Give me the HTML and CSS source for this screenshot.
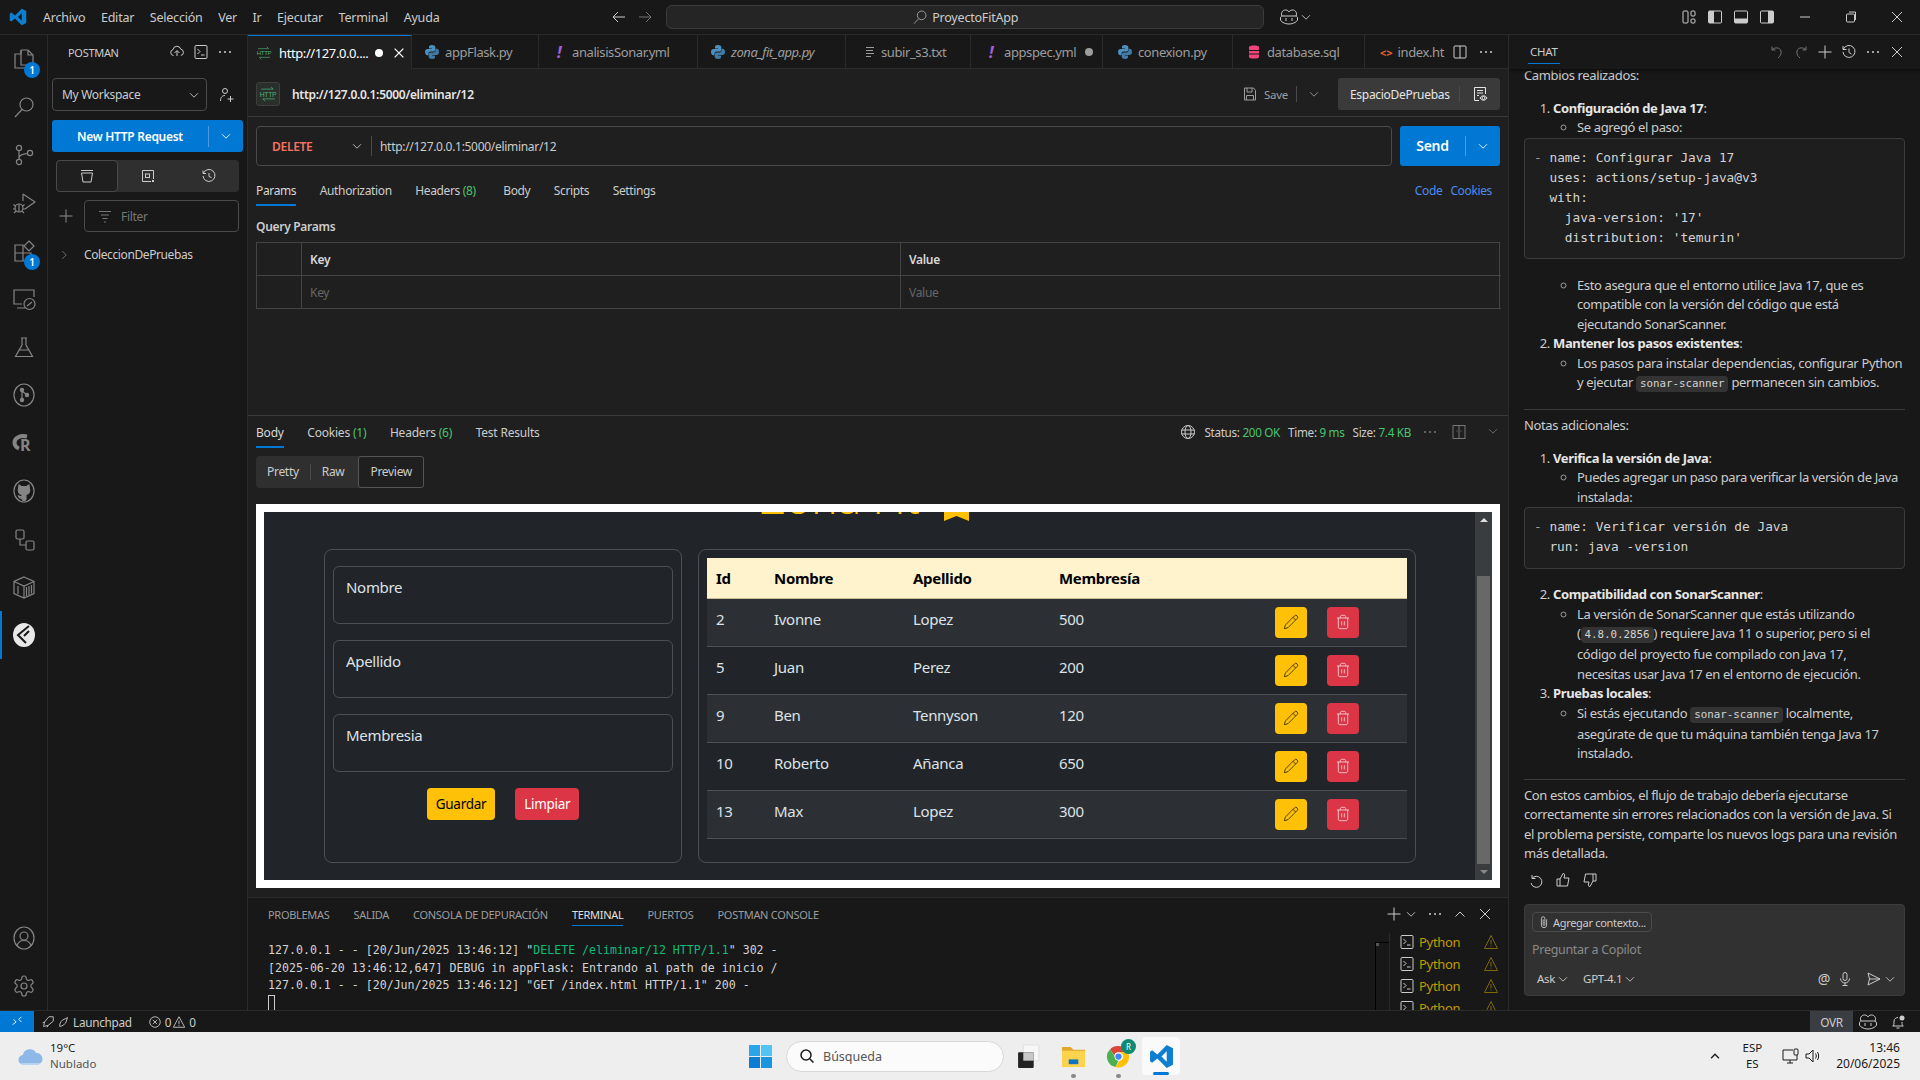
FILE: index.html
```html
<!DOCTYPE html>
<html lang="es">
<head>
    <meta charset="UTF-8">
    <title>ProyectoFitApp - Postman</title>
    <link rel="stylesheet" href="styles.css">
</head>
<body>
    <svg class="defs" xmlns="http://www.w3.org/2000/svg">
        <symbol id="i-files" viewBox="0 0 24 24"><path d="M9 3h7l5 5v10h-4M9 3v4M16 3v5h5"/><path d="M9 7H3v14h14v-3M9 3v15h8"/></symbol>
        <symbol id="i-search" viewBox="0 0 24 24"><circle cx="14.5" cy="9.5" r="6.5"/><path d="M10 14.5L3 22"/></symbol>
        <symbol id="i-scm" viewBox="0 0 24 24"><circle cx="7" cy="5" r="2.6"/><circle cx="7" cy="19" r="2.6"/><circle cx="18" cy="10" r="2.6"/><path d="M7 7.6v8.8M15.4 10.5c-4 .5-8.4 1-8.4 5"/></symbol>
        <symbol id="i-debug" viewBox="0 0 24 24"><path d="M11 3l12 8-10 7"/><path d="M11 3v7"/><circle cx="7" cy="17" r="4"/><path d="M7 13v8M1.5 13.5l2.5 2M12.5 13.5l-2.5 2M1 18h2M13 18h-2M2 22l2-2M12 22l-2-2"/></symbol>
        <symbol id="i-ext" viewBox="0 0 24 24"><path d="M3 6h8v16H3zM3 14h16v8h-8"/><path d="M17 2l5 5-5 5-5-5z"/></symbol>
        <symbol id="i-remote" viewBox="0 0 24 24"><path d="M10 17H2V3h20v7M5 21h8"/><circle cx="17.5" cy="17" r="5.5"/><path d="M15 19l5-4"/></symbol>
        <symbol id="i-beaker" viewBox="0 0 24 24"><path d="M9 3h6M10 3v7L3.5 21.5h17L14 10V3M7 15h10"/></symbol>
        <symbol id="i-graph" viewBox="0 0 24 24"><ellipse cx="12" cy="12" rx="10" ry="11"/><circle cx="10" cy="7" r="1.6" fill="currentColor"/><circle cx="10" cy="17" r="1.6" fill="currentColor"/><circle cx="15" cy="12" r="1.6" fill="currentColor"/><path d="M10 7v10M10 8l5 4"/></symbol>
        <symbol id="i-github" viewBox="0 0 24 24"><ellipse cx="12" cy="12" rx="10" ry="11"/><path fill="currentColor" d="M7 6l2.500 1.500h5L17 6l.4 3.500c1 2.500 0 5.500-3.400 6V20l-1 1.500h-2L10 20v-1c-2 .5-3-.5-3.500-2l3.500 1v-2.500c-3.400-.5-4.400-3.500-3.400-6z"/></symbol>
        <symbol id="i-tree" viewBox="0 0 24 24"><rect x="4" y="3" width="8" height="9" rx="1.500"/><rect x="14" y="14" width="8" height="9" rx="1.500"/><path d="M8 12v6h6"/></symbol>
        <symbol id="i-box" viewBox="0 0 24 24"><path d="M12 2l10 4.500v12L12 23 2 18.500v-12zM2 6.500L12 11l10-4.500M12 11v12"/><path d="M14.500 12v9M17 11v9M19.500 10v8.500M6 11v8"/></symbol>
        <symbol id="i-account" viewBox="0 0 24 24"><ellipse cx="12" cy="12" rx="10" ry="11"/><circle cx="12" cy="10" r="4"/><path d="M5 20c1-4 4-5.500 7-5.500s6 1.500 7 5.500"/></symbol>
        <symbol id="i-gear" viewBox="0 0 24 24"><path d="M12.220 2h-.44a2 2 0 0 0-2 2v.18a2 2 0 0 1-1 1.730l-.43.25a2 2 0 0 1-2 0l-.15-.08a2 2 0 0 0-2.730.73l-.22.38a2 2 0 0 0 .73 2.730l.15.1a2 2 0 0 1 1 1.720v.51a2 2 0 0 1-1 1.740l-.15.09a2 2 0 0 0-.73 2.730l.22.38a2 2 0 0 0 2.730.73l.15-.08a2 2 0 0 1 2 0l.43.25a2 2 0 0 1 1 1.730V20a2 2 0 0 0 2 2h.44a2 2 0 0 0 2-2v-.18a2 2 0 0 1 1-1.730l.43-.25a2 2 0 0 1 2 0l.15.08a2 2 0 0 0 2.730-.73l.22-.39a2 2 0 0 0-.73-2.730l-.15-.08a2 2 0 0 1-1-1.740v-.5a2 2 0 0 1 1-1.740l.15-.09a2 2 0 0 0 .73-2.730l-.22-.38a2 2 0 0 0-2.730-.73l-.15.08a2 2 0 0 1-2 0l-.43-.25a2 2 0 0 1-1-1.730V4a2 2 0 0 0-2-2z"/><circle cx="12" cy="12" r="3"/></symbol>
        <symbol id="i-chev-d" viewBox="0 0 16 16"><path d="M3.500 6L8 10.500 12.500 6"/></symbol>
        <symbol id="i-chev-r" viewBox="0 0 16 16"><path d="M6 3.500L10.500 8 6 12.500"/></symbol>
        <symbol id="i-chev-u" viewBox="0 0 16 16"><path d="M3.500 10.500L8 6l4.500 4.500"/></symbol>
        <symbol id="i-close" viewBox="0 0 16 16"><path d="M3 3l10 10M13 3L3 13"/></symbol>
        <symbol id="i-plus" viewBox="0 0 16 16"><path d="M8 1.500v13M1.500 8h13"/></symbol>
        <symbol id="i-dots" viewBox="0 0 16 16"><circle cx="3" cy="8" r="1" fill="currentColor" stroke="none"/><circle cx="8" cy="8" r="1" fill="currentColor" stroke="none"/><circle cx="13" cy="8" r="1" fill="currentColor" stroke="none"/></symbol>
        <symbol id="i-back" viewBox="0 0 16 16"><path d="M14 8H2M7 3L2 8l5 5"/></symbol>
        <symbol id="i-fwd" viewBox="0 0 16 16"><path d="M2 8h12M9 3l5 5-5 5"/></symbol>
        <symbol id="i-copilot" viewBox="0 0 20 16"><path d="M3 7c-1.500-3 .5-6 3.500-6 2 0 3 1 3.500 2 .5-1 1.500-2 3.500-2 3 0 5 3 3.500 6 1 .5 1.500 1 1.500 2v2c0 1-3.500 4-8.500 4S1.500 12 1.500 11V9c0-1 .5-1.500 1.500-2z"/><path d="M7 9v3M13 9v3M3 7h14" /></symbol>
        <symbol id="i-http" viewBox="0 0 24 24"><path d="M3 5.500h16l-3-3M21 18.500H5l3 3"/><text x="12" y="15.500" text-anchor="middle" font-size="9" font-family="Liberation Sans, sans-serif" fill="currentColor" stroke="none">HTTP</text></symbol>
        <symbol id="i-python" viewBox="0 0 16 16"><path fill="#4d90bf" stroke="none" d="M7.800 1C5.500 1 5 2 5 3v1.500h3V5H3.500C2 5 1 6 1 8s1 3.200 2.300 3.200H4.500V9.500C4.500 8.300 5.500 7.500 6.700 7.500h2.800c1 0 1.800-.8 1.800-1.800V3c0-1.200-1.500-2-3.500-2z"/><path fill="#3f7ba6" stroke="none" d="M8.200 15c2.300 0 2.800-1 2.800-2v-1.500H8V11h4.500c1.500 0 2.500-1 2.500-3s-1-3.200-2.300-3.200h-1.200v1.700c0 1.200-1 2-2.200 2H6.500c-1 0-1.800.8-1.800 1.800V13c0 1.200 1.500 2 3.500 2z"/></symbol>
        <symbol id="i-term" viewBox="0 0 16 16"><rect x="2" y="1.500" width="12" height="13" rx="1"/><path d="M4.500 5L7 7.500 4.500 10M8 11h3.500"/></symbol>
        <symbol id="i-warn" viewBox="0 0 16 16"><path d="M8 1.500l6.500 13h-13zM8 6v4.500M8 11.700v1"/></symbol>
        <symbol id="i-pencil" viewBox="0 0 24 24"><path d="M17 3a2.850 2.830 0 1 1 4 4L7.500 20.500 2 22l1.500-5.500zM15 5l4 4"/></symbol>
        <symbol id="i-trash" viewBox="0 0 24 24"><path d="M3 6h18M19 6v14c0 1-1 2-2 2H7c-1 0-2-1-2-2V6M8 6V4c0-1 1-2 2-2h4c1 0 2 1 2 2v2M10 11v6M14 11v6"/></symbol>
    </svg>

    <header class="titlebar">
        <svg class="vs-logo" viewBox="0 0 24 24"><path fill="#0e7fd0" d="M17 1l6 3v16l-6 3L8 14l-5 4-2-1.500V7.500L3 6l5 4zM17 7l-5 5 5 5z"/></svg>
        <nav class="menu">
            <span>Archivo</span><span>Editar</span><span>Selección</span><span>Ver</span><span>Ir</span><span>Ejecutar</span><span>Terminal</span><span>Ayuda</span>
        </nav>
        <div class="nav-arrows">
            <svg class="ic"><use href="#i-back"/></svg>
            <svg class="ic dim"><use href="#i-fwd"/></svg>
        </div>
        <div class="command-center">
            <svg class="ic"><use href="#i-search"/></svg>
            <span>ProyectoFitApp</span>
        </div>
        <div class="title-copilot">
            <svg class="ic-copilot"><use href="#i-copilot"/></svg>
            <svg class="ic-sm"><use href="#i-chev-d"/></svg>
        </div>
        <div class="layout-btns">
            <svg class="ic" viewBox="0 0 16 16"><rect x="2" y="2" width="5" height="12" rx="1"/><rect x="10" y="2" width="4" height="5" rx="1"/><rect x="10" y="10" width="4" height="4" rx="1"/></svg>
            <svg class="ic" viewBox="0 0 16 16"><rect x="1.500" y="2" width="13" height="12" rx="1"/><rect class="solid" x="2" y="2" width="5" height="12"/></svg>
            <svg class="ic" viewBox="0 0 16 16"><rect x="1.500" y="2" width="13" height="12" rx="1"/><rect class="solid" x="2" y="9.500" width="12" height="4.500"/></svg>
            <svg class="ic" viewBox="0 0 16 16"><rect x="1.500" y="2" width="13" height="12" rx="1"/><rect class="solid" x="9" y="2" width="5" height="12"/></svg>
        </div>
        <div class="win-btns">
            <span class="win-btn"><svg class="ic" viewBox="0 0 16 16"><path d="M3 8h10"/></svg></span>
            <span class="win-btn"><svg class="ic" viewBox="0 0 16 16"><rect x="3.500" y="5" width="8" height="8" rx="1"/><path d="M6 3h6.500v8"/></svg></span>
            <span class="win-btn"><svg class="ic"><use href="#i-close"/></svg></span>
        </div>
    </header>

    <div class="workbench">
        <aside class="activity">
            <div class="act-top">
                <div class="act-item"><svg class="ic-24"><use href="#i-files"/></svg><span class="act-badge">1</span></div>
                <div class="act-item"><svg class="ic-24"><use href="#i-search"/></svg></div>
                <div class="act-item"><svg class="ic-24"><use href="#i-scm"/></svg></div>
                <div class="act-item"><svg class="ic-24"><use href="#i-debug"/></svg></div>
                <div class="act-item"><svg class="ic-24"><use href="#i-ext"/></svg><span class="act-badge">1</span></div>
                <div class="act-item"><svg class="ic-24"><use href="#i-remote"/></svg></div>
                <div class="act-item"><svg class="ic-24"><use href="#i-beaker"/></svg></div>
                <div class="act-item"><svg class="ic-24"><use href="#i-graph"/></svg></div>
                <div class="act-item"><svg class="ic-24" viewBox="0 0 24 24"><path d="M15 5.500C8 4 2.500 7 2.500 11.500c0 3 2 5 4.500 6" stroke-width="4"/><text class="r-letter" x="8" y="20">R</text></svg></div>
                <div class="act-item"><svg class="ic-24"><use href="#i-github"/></svg></div>
                <div class="act-item"><svg class="ic-24"><use href="#i-tree"/></svg></div>
                <div class="act-item"><svg class="ic-24"><use href="#i-box"/></svg></div>
                <div class="act-item act-active">
                    <svg class="ic-24 postman" viewBox="0 0 24 24"><ellipse cx="12" cy="12" rx="11" ry="12" fill="#e8e8e8" stroke="none"/><path d="M17 3l-11 9 8 8M12 13l5-5" stroke="#181818" stroke-width="2" fill="none"/></svg>
                </div>
            </div>
            <div class="act-bottom">
                <div class="act-item"><svg class="ic-24"><use href="#i-account"/></svg></div>
                <div class="act-item"><svg class="ic-24"><use href="#i-gear"/></svg></div>
            </div>
        </aside>

        <aside class="sidebar">
            <div class="side-head">
                <span class="side-title">POSTMAN</span>
                <svg class="ic" viewBox="0 0 16 16"><path d="M8 12V7M5.500 9L8 6.500 10.500 9M4.500 11.500A3 3 0 0 1 4 5.600a4 4 0 0 1 7.800-.4 3.200 3.200 0 0 1 0 6.300"/></svg>
                <svg class="ic"><use href="#i-term"/></svg>
                <svg class="ic"><use href="#i-dots"/></svg>
            </div>
            <div class="workspace-row">
                <div class="workspace-select"><span>My Workspace</span><svg class="ic-sm"><use href="#i-chev-d"/></svg></div>
                <svg class="ic" viewBox="0 0 16 16"><circle cx="6" cy="4" r="2.500"/><path d="M1.500 14c0-4 2-5.500 4.500-5.500M11.500 9v6M8.500 12h6"/></svg>
            </div>
            <div class="new-request">
                <span class="new-label">New HTTP Request</span>
                <span class="new-chev"><svg class="ic-sm"><use href="#i-chev-d"/></svg></span>
            </div>
            <div class="side-seg">
                <span class="seg-item seg-on"><svg class="ic" viewBox="0 0 16 16"><path d="M2 2.500h12M2.500 5h11l-1.500 9H4z"/></svg></span>
                <span class="seg-item"><svg class="ic" viewBox="0 0 16 16"><path d="M13.500 11V2.500h-11v11H11"/><rect x="5.500" y="6" width="4" height="3.500"/><rect class="solid" x="12" y="12" width="2" height="2"/></svg></span>
                <span class="seg-item"><svg class="ic" viewBox="0 0 16 16"><path d="M2.500 5a6 6 0 1 1-.5 3M2 2.500V5.500h3M8 5v3.500l2.500 1"/></svg></span>
            </div>
            <div class="filter-row">
                <svg class="ic"><use href="#i-plus"/></svg>
                <div class="filter-box">
                    <svg class="ic" viewBox="0 0 16 16"><path d="M2 3.500h12M4 7h8M5.500 10.500h5M7 14h2"/></svg>
                    <span>Filter</span>
                </div>
            </div>
            <div class="tree-row">
                <svg class="ic-sm"><use href="#i-chev-r"/></svg>
                <span>ColeccionDePruebas</span>
            </div>
        </aside>

        <main class="main">
            <div class="tabs">
                <div class="tab tab-active tab-w1"><svg class="ic http-ic"><use href="#i-http"/></svg><span class="tab-name">http://127.0.0....</span><span class="dot dot-white"></span><svg class="ic-sm tab-close"><use href="#i-close"/></svg></div>
                <div class="tab tab-w2"><svg class="ic"><use href="#i-python"/></svg><span class="tab-name">appFlask.py</span></div>
                <div class="tab tab-w3"><span class="bang">!</span><span class="tab-name">analisisSonar.yml</span></div>
                <div class="tab tab-w4"><svg class="ic"><use href="#i-python"/></svg><span class="tab-name ital">zona_fit_app.py</span></div>
                <div class="tab tab-w5"><svg class="ic" viewBox="0 0 16 16"><path d="M2 3.500h8M2 6.500h7M2 9.500h8M2 12.500h5"/></svg><span class="tab-name">subir_s3.txt</span></div>
                <div class="tab tab-w6"><span class="bang">!</span><span class="tab-name">appspec.yml</span><span class="dot"></span></div>
                <div class="tab tab-w7"><svg class="ic"><use href="#i-python"/></svg><span class="tab-name">conexion.py</span></div>
                <div class="tab tab-w8"><svg class="ic db-ic" viewBox="0 0 16 16"><path d="M3 3c0-2 10-2 10 0v10c0 2-10 2-10 0z" fill="#f0447a" stroke="none"/><path d="M3 6.500h10M3 10h10" stroke="#1a1a1a"/></svg><span class="tab-name">database.sql</span></div>
                <div class="tab tab-w9"><span class="html-ic">&lt;&gt;</span><span class="tab-name">index.ht</span></div>
                <div class="tab-actions">
                    <svg class="ic" viewBox="0 0 16 16"><rect x="2" y="2" width="12" height="12" rx="1"/><path d="M8 2v12"/></svg>
                    <svg class="ic"><use href="#i-dots"/></svg>
                </div>
            </div>

            <div class="postman-view">
                <div class="req-head">
                    <span class="http-box"><svg class="ic-18"><use href="#i-http"/></svg></span>
                    <span class="req-name">http://127.0.0.1:5000/eliminar/12</span>
                    <div class="req-save">
                        <svg class="ic" viewBox="0 0 16 16"><path d="M2.500 2h9l2 2.500V14h-11zM5 2v4h5V2M4.500 14V9.500h7V14"/></svg>
                        <span>Save</span>
                        <i class="vsep"></i>
                        <svg class="ic-sm"><use href="#i-chev-d"/></svg>
                    </div>
                    <div class="env-btn">
                        <span>EspacioDePruebas</span>
                        <i class="vsep"></i>
                        <svg class="ic" viewBox="0 0 16 16"><path d="M7 14.500H2.500v-13h11V8M5 4.500h6M5 7h6M5 9.500h2"/><circle cx="11.500" cy="12" r="1.500"/><path d="M8 12c2-3 5-3 7 0-2 3-5 3-7 0z"/></svg>
                    </div>
                </div>

                <div class="url-bar">
                    <div class="url-input">
                        <span class="method">DELETE</span>
                        <svg class="ic-sm"><use href="#i-chev-d"/></svg>
                        <i class="vsep tall"></i>
                        <span class="url-text">http://127.0.0.1:5000/eliminar/12</span>
                    </div>
                    <div class="send-btn">
                        <span class="send-label">Send</span>
                        <span class="send-chev"><svg class="ic-sm"><use href="#i-chev-d"/></svg></span>
                    </div>
                </div>

                <div class="req-tabs">
                    <span class="rtab rtab-on">Params</span>
                    <span class="rtab">Authorization</span>
                    <span class="rtab rtab-wide">Headers <em>(8)</em></span>
                    <span class="rtab">Body</span>
                    <span class="rtab">Scripts</span>
                    <span class="rtab">Settings</span>
                    <span class="req-links"><a>Code</a><a>Cookies</a></span>
                </div>

                <h2 class="params-title">Query Params</h2>
                <div class="params-table">
                    <span class="pcell"></span><span class="pcell phead">Key</span><span class="pcell phead plast">Value</span>
                    <span class="pcell pbot"></span><span class="pcell pbot pph">Key</span><span class="pcell pbot pph plast">Value</span>
                </div>

                <div class="res-tabs">
                    <span class="rtab rtab-on">Body</span>
                    <span class="rtab">Cookies <em>(1)</em></span>
                    <span class="rtab">Headers <em>(6)</em></span>
                    <span class="rtab">Test Results</span>
                    <div class="res-meta">
                        <svg class="ic" viewBox="0 0 16 16"><circle cx="8" cy="8" r="6.500"/><ellipse cx="8" cy="8" rx="3" ry="6.500"/><path d="M1.500 6h13M1.500 10h13"/></svg>
                        <span>Status: <b>200 OK</b></span>
                        <span>Time: <b>9 ms</b></span>
                        <span>Size: <b>7.4 KB</b></span>
                        <svg class="ic res-dots"><use href="#i-dots"/></svg>
                        <svg class="ic res-split" viewBox="0 0 16 16"><rect x="2" y="1.500" width="12" height="13"/><path d="M8 1.500v13"/><path d="M5.500 7h1M9.500 7h1"/></svg>
                        <svg class="ic-sm res-chev"><use href="#i-chev-d"/></svg>
                    </div>
                </div>

                <div class="view-seg">
                    <span class="vs-item">Pretty</span><i class="vsep"></i><span class="vs-item">Raw</span><span class="vs-item vs-on">Preview</span>
                </div>

                <div class="preview">
                    <div class="app">
                        <div class="app-page">
                            <div class="app-title">
                                <h1>Zona Fit</h1>
                                <svg class="app-mark" viewBox="0 0 25 36"><path fill="#ffc107" d="M0 0h25v36l-12.500-5L0 36z"/></svg>
                            </div>
                            <div class="app-cols">
                                <section class="app-card form-card">
                                    <div class="field">Nombre</div>
                                    <div class="field">Apellido</div>
                                    <div class="field">Membresia</div>
                                    <div class="form-btns">
                                        <span class="btn btn-warn">Guardar</span>
                                        <span class="btn btn-danger">Limpiar</span>
                                    </div>
                                </section>
                                <section class="app-card table-card">
                                    <table class="members">
                                        <colgroup><col class="c-id"><col class="c-nom"><col class="c-ape"><col class="c-mem"><col></colgroup>
                                        <thead><tr><th>Id</th><th>Nombre</th><th>Apellido</th><th>Membresía</th><th></th></tr></thead>
                                        <tbody>
                                            <tr><td>2</td><td>Ivonne</td><td>Lopez</td><td>500</td><td class="acts"><span class="act act-edit"><svg><use href="#i-pencil"/></svg></span><span class="act act-del"><svg><use href="#i-trash"/></svg></span></td></tr>
                                            <tr><td>5</td><td>Juan</td><td>Perez</td><td>200</td><td class="acts"><span class="act act-edit"><svg><use href="#i-pencil"/></svg></span><span class="act act-del"><svg><use href="#i-trash"/></svg></span></td></tr>
                                            <tr><td>9</td><td>Ben</td><td>Tennyson</td><td>120</td><td class="acts"><span class="act act-edit"><svg><use href="#i-pencil"/></svg></span><span class="act act-del"><svg><use href="#i-trash"/></svg></span></td></tr>
                                            <tr><td>10</td><td>Roberto</td><td>Añanca</td><td>650</td><td class="acts"><span class="act act-edit"><svg><use href="#i-pencil"/></svg></span><span class="act act-del"><svg><use href="#i-trash"/></svg></span></td></tr>
                                            <tr><td>13</td><td>Max</td><td>Lopez</td><td>300</td><td class="acts"><span class="act act-edit"><svg><use href="#i-pencil"/></svg></span><span class="act act-del"><svg><use href="#i-trash"/></svg></span></td></tr>
                                        </tbody>
                                    </table>
                                </section>
                            </div>
                        </div>
                        <div class="app-scroll">
                            <span class="arrow-up"></span>
                            <span class="scroll-thumb"></span>
                            <span class="arrow-down"></span>
                        </div>
                    </div>
                </div>
            </div>

            <section class="panel">
                <div class="panel-tabs">
                    <span>PROBLEMAS</span><span>SALIDA</span><span>CONSOLA DE DEPURACIÓN</span><span class="ptab-on">TERMINAL</span><span>PUERTOS</span><span>POSTMAN CONSOLE</span>
                    <div class="panel-actions">
                        <svg class="ic plus-big"><use href="#i-plus"/></svg>
                        <svg class="ic-sm"><use href="#i-chev-d"/></svg>
                        <svg class="ic"><use href="#i-dots"/></svg>
                        <svg class="ic"><use href="#i-chev-u"/></svg>
                        <svg class="ic"><use href="#i-close"/></svg>
                    </div>
                </div>
                <div class="panel-body">
                    <pre class="term">127.0.0.1 - - [20/Jun/2025 13:46:12] "<span class="g">DELETE /eliminar/12 HTTP/1.1</span>" 302 -
[2025-06-20 13:46:12,647] DEBUG in appFlask: Entrando al path de inicio /
127.0.0.1 - - [20/Jun/2025 13:46:12] "GET /index.html HTTP/1.1" 200 -
<span class="cursor"></span></pre>
                    <div class="term-rule"></div>
                    <div class="term-list">
                        <div class="term-row"><svg class="ic term-ic"><use href="#i-term"/></svg><span>Python</span><svg class="ic warn-ic"><use href="#i-warn"/></svg></div>
                        <div class="term-row"><svg class="ic term-ic"><use href="#i-term"/></svg><span>Python</span><svg class="ic warn-ic"><use href="#i-warn"/></svg></div>
                        <div class="term-row"><svg class="ic term-ic"><use href="#i-term"/></svg><span>Python</span><svg class="ic warn-ic"><use href="#i-warn"/></svg></div>
                        <div class="term-row"><svg class="ic term-ic"><use href="#i-term"/></svg><span>Python</span><svg class="ic warn-ic"><use href="#i-warn"/></svg></div>
                    </div>
                </div>
            </section>
        </main>

        <aside class="chat">
            <div class="chat-head">
                <span class="chat-title">CHAT</span>
                <div class="chat-actions">
                    <svg class="ic dim" viewBox="0 0 16 16"><path d="M3 6V2.500M3 6h3.500M3 6c2-3 8-3 9 1 .7 3-1 5.500-3 7"/></svg>
                    <svg class="ic dim" viewBox="0 0 16 16"><path d="M13 6V2.500M13 6H9.500M13 6C11 3 5 3 4 7c-.7 3 1 5.500 3 7"/></svg>
                    <svg class="ic"><use href="#i-plus"/></svg>
                    <svg class="ic" viewBox="0 0 16 16"><path d="M2.500 5a6 6 0 1 1-.5 3M2 2V5.500h3.500M8 4.500v4l2.500 1.500"/></svg>
                    <svg class="ic"><use href="#i-dots"/></svg>
                    <svg class="ic"><use href="#i-close"/></svg>
                </div>
            </div>
            <div class="chat-body">
                <p class="first">Cambios realizados:</p>
                <ol>
                    <li><b>Configuración de Java 17</b>:
                        <ul><li>Se agregó el paso:</li></ul>
                    </li>
                </ol>
                <pre class="code"><i>-</i> name: Configurar Java 17
  uses: actions/setup-java@v3
  with:
    java-version: '17'
    distribution: 'temurin'</pre>
                <ol class="after-code">
                    <li class="nonum">
                        <ul><li>Esto asegura que el entorno utilice Java 17, que es<br>compatible con la versión del código que está<br>ejecutando SonarScanner.</li></ul>
                    </li>
                    <li value="2"><b>Mantener los pasos existentes</b>:
                        <ul><li>Los pasos para instalar dependencias, configurar Python<br>y ejecutar <code>sonar-scanner</code> permanecen sin cambios.</li></ul>
                    </li>
                </ol>
                <hr>
                <p>Notas adicionales:</p>
                <ol>
                    <li><b>Verifica la versión de Java</b>:
                        <ul><li>Puedes agregar un paso para verificar la versión de Java<br>instalada:</li></ul>
                    </li>
                </ol>
                <pre class="code short"><i>-</i> name: Verificar versión de Java
  run: java -version</pre>
                <ol class="after-code2">
                    <li value="2"><b>Compatibilidad con SonarScanner</b>:
                        <ul><li>La versión de SonarScanner que estás utilizando<br>(<code>4.8.0.2856</code>) requiere Java 11 o superior, pero si el<br>código del proyecto fue compilado con Java 17,<br>necesitas usar Java 17 en el entorno de ejecución.</li></ul>
                    </li>
                    <li value="3"><b>Pruebas locales</b>:
                        <ul><li>Si estás ejecutando <code>sonar-scanner</code> localmente,<br>asegúrate de que tu máquina también tenga Java 17<br>instalado.</li></ul>
                    </li>
                </ol>
                <hr>
                <p>Con estos cambios, el flujo de trabajo debería ejecutarse<br>correctamente sin errores relacionados con la versión de Java. Si<br>el problema persiste, comparte los nuevos logs para una revisión<br>más detallada.</p>
                <div class="feedback">
                    <svg class="ic" viewBox="0 0 16 16"><path d="M4 3v3.500h3.500M4 6.500A5.500 5.500 0 1 1 3 11"/></svg>
                    <svg class="ic" viewBox="0 0 16 16"><path d="M2 7h3v7H2zM5 7l3-5.500c1.500 0 2 1 1.500 2.500L9 6h5l-1.500 8H5"/></svg>
                    <svg class="ic" viewBox="0 0 16 16"><path d="M14 9h-3V2h3zM11 9l-3 5.500C6.500 14.500 6 13.500 6.500 12L7 10H2l1.500-8H11"/></svg>
                </div>
            </div>
            <div class="chat-input">
                <div class="ctx-chip">
                    <svg class="ic-sm" viewBox="0 0 16 16"><path d="M11 5v6.500a3 3 0 0 1-6 0V4a2 2 0 0 1 4 0v7a1 1 0 0 1-2 0V5"/></svg>
                    <span>Agregar contexto...</span>
                </div>
                <div class="chat-ph">Preguntar a Copilot</div>
                <div class="chat-tools">
                    <span>Ask</span><svg class="ic-sm"><use href="#i-chev-d"/></svg>
                    <span class="model">GPT-4.1</span><svg class="ic-sm"><use href="#i-chev-d"/></svg>
                    <span class="at">@</span>
                    <svg class="ic mic" viewBox="0 0 16 16"><rect x="6" y="1.500" width="4" height="8" rx="2"/><path d="M3.500 7.500a4.500 4.500 0 0 0 9 0M8 12v2.500M5.500 14.500h5"/></svg>
                    <svg class="ic" viewBox="0 0 16 16"><path d="M2 2l12 6-12 6 1.500-6zM3.500 8H14"/></svg>
                    <svg class="ic-sm"><use href="#i-chev-d"/></svg>
                </div>
            </div>
        </aside>
    </div>

    <footer class="statusbar">
        <span class="remote"><svg class="ic-sm" viewBox="0 0 16 16"><path d="M3 11l4-3-3-3M13 2l-3 3 3 3"/></svg></span>
        <span class="launch"><svg class="ic-sm" viewBox="0 0 16 16"><path d="M3 13l1-5 5-6h5v5l-6 5zM2 9l2-1M7 14l1-2"/></svg><svg class="ic-sm" viewBox="0 0 16 16"><path d="M3 13c0-3 1-5 3-7l6-3-2 6c-2 2-4 4-7 4z"/></svg>Launchpad</span>
        <span class="errs"><svg class="ic-sm" viewBox="0 0 16 16"><circle cx="8" cy="8" r="6"/><path d="M5.500 5.500l5 5M10.500 5.500l-5 5"/></svg>0<svg class="ic-sm" viewBox="0 0 16 16"><path d="M8 2l6.500 12h-13zM8 6.500v4M8 11.500v1"/></svg>0</span>
        <span class="ovr">OVR</span>
        <span class="sb-ic"><svg class="ic-copilot"><use href="#i-copilot"/></svg></span>
        <span class="sb-ic"><svg class="ic" viewBox="0 0 16 16"><path d="M3 12c1-1 1-2 1-5 0-2 2-3.500 4-3.500M13 12c-1-1-1-1.500-1-4M2.500 12h11M6.500 14h3"/><circle class="solid" cx="12" cy="4" r="2.500"/></svg></span>
    </footer>

    <footer class="taskbar">
        <div class="weather">
            <svg class="cloud" viewBox="0 0 26 20"><path fill="#8db8e8" d="M6 19a5 5 0 0 1-1-10 7.500 7.500 0 0 1 14-2 6 6 0 0 1 1 12z"/><path fill="#c3daf4" d="M6 19a5 5 0 0 1-3-1.500h21A6 6 0 0 1 20 19z"/></svg>
            <div class="weather-text"><span>19°C</span><span class="w-sub">Nublado</span></div>
        </div>
        <div class="task-center">
            <svg class="win-logo" viewBox="0 0 24 24"><path fill="#2aa6e8" d="M0 0h11.500v11.500H0z"/><path fill="#52c3f3" d="M12.500 0H24v11.500H12.500z"/><path fill="#0c7dd0" d="M0 12.500h11.500V24H0z"/><path fill="#1a96e0" d="M12.500 12.500H24V24H12.500z"/></svg>
            <div class="task-search"><svg viewBox="0 0 16 16"><circle cx="7" cy="7" r="5"/><path d="M11 11l3.500 3.500"/></svg><span>Búsqueda</span></div>
            <svg class="task-ic" viewBox="0 0 24 24"><rect x="7" y="1" width="15" height="15" rx="1" fill="#f7f7f7" stroke="#e0e0e0"/><rect x="2" y="8" width="15" height="15" rx="1" fill="#222"/><rect x="7" y="8" width="10" height="8" fill="#c8c8c8"/></svg>
            <span class="task-app task-folder"><svg class="task-ic" viewBox="0 0 26 24"><path fill="#e0a82e" d="M1 2h9l3 3h12v5H1z"/><path fill="#fcd34d" d="M1 6h24v17H1z"/><path fill="#0c76c4" d="M8 15h10v5H8z"/></svg><i class="task-dot"></i></span>
            <span class="task-app task-chrome"><svg class="task-ic" viewBox="0 0 24 24"><path fill="#db4437" d="M12 2a10 10 0 0 1 9 6H12a4 4 0 0 0-4 3L4 5a10 10 0 0 1 8-3z"/><path fill="#4caf50" d="M4 5l5 8a4 4 0 0 0 3 3l-3 6A10 10 0 0 1 4 5z"/><path fill="#ffc107" d="M21 8a10 10 0 0 1-12 14l4-6a4 4 0 0 0 3-6l-4-2z"/><circle cx="12" cy="12" r="3.800" fill="#fff"/><circle cx="12" cy="12" r="3" fill="#4285f4"/></svg><span class="chrome-badge">R</span><i class="task-dot"></i></span>
            <span class="task-app task-on"><svg class="task-ic" viewBox="0 0 24 24"><path fill="#0e7fd0" d="M17 1l6 3v16l-6 3L8 14l-5 4-2-1.500V7.500L3 6l5 4zM17 7l-5 5 5 5z"/></svg><i class="task-bar"></i></span>
        </div>
        <div class="tray">
            <svg class="ic-sm tray-up"><use href="#i-chev-u"/></svg>
            <div class="lang"><span>ESP</span><span>ES</span></div>
            <svg class="tray-ic tray-net" viewBox="0 0 18 16"><path d="M11 2H1v10h14V7M5 15h6M8 12v3"/><rect x="12" y="1" width="4" height="6" rx="1"/></svg>
            <svg class="tray-ic" viewBox="0 0 18 16"><path d="M2 6h3l4-4v12l-4-4H2zM11.500 5.500c1 1.500 1 3.500 0 5M13.500 4c1.500 2.500 1.500 5.500 0 8"/></svg>
            <div class="clock"><span>13:46</span><span>20/06/2025</span></div>
        </div>
    </footer>
</body>
</html>
```

FILE: styles.css
```css
* {
    box-sizing: border-box;
}
html, body {
    margin: 0;
    height: 1080px;
    overflow: hidden;
}
body {
    display: flex;
    flex-direction: column;
    background-color: #181818;
    color: #cccccc;
    font-family: "Noto Sans", sans-serif;
    font-size: 12px;
    letter-spacing: -0.3px;
}
.defs {
    display: none;
}
svg {
    fill: none;
    stroke: currentColor;
    stroke-width: 1;
    flex: none;
}
.solid {
    fill: currentColor;
    stroke: none;
}
.ic {
    width: 16px;
    height: 16px;
}
.ic-sm {
    width: 14px;
    height: 14px;
}
.ic-18 {
    width: 18px;
    height: 18px;
}
.ic-24 {
    width: 24px;
    height: 24px;
    color: #858585;
    stroke-width: 1.2;
}
.ic-copilot {
    width: 20px;
    height: 16px;
}
.dim {
    opacity: 0.5;
}
.r-letter {
    fill: #858585;
    stroke: none;
    font-size: 16px;
    font-weight: 700;
    font-family: "Noto Sans", sans-serif;
}
.vsep {
    display: block;
    flex: none;
    width: 1px;
    height: 16px;
    background-color: #4a4a4a;
}

/* title bar */
.titlebar {
    flex: none;
    height: 35px;
    display: flex;
    align-items: center;
    border-bottom: 1px solid #2b2b2b;
    font-size: 12.5px;
    letter-spacing: -0.2px;
}
.vs-logo {
    width: 18px;
    height: 18px;
    margin-left: 9px;
    stroke: none;
}
.menu {
    display: flex;
    gap: 15.5px;
    width: 571px;
    margin-left: 16px;
}
.nav-arrows {
    display: flex;
    gap: 10px;
    width: 56px;
}
.command-center {
    width: 601px;
    height: 24px;
    display: flex;
    align-items: center;
    justify-content: center;
    gap: 4px;
    background-color: #252525;
    border: 1px solid #3c3c3c;
    border-radius: 6px;
}
.title-copilot {
    display: flex;
    align-items: center;
    margin-left: 15px;
}
.layout-btns {
    display: flex;
    gap: 10px;
    margin-left: 368px;
}
.win-btns {
    display: flex;
    margin-left: 7px;
}
.win-btn {
    width: 46px;
    display: flex;
    justify-content: center;
}

/* main layout */
.workbench {
    flex: none;
    height: 975px;
    display: flex;
}
.activity {
    flex: none;
    width: 48px;
    display: flex;
    flex-direction: column;
    justify-content: space-between;
    border-right: 1px solid #2b2b2b;
}
.act-item {
    position: relative;
    height: 48px;
    display: flex;
    align-items: center;
    justify-content: center;
}
.act-active {
    border-left: 2px solid #0078d4;
    padding-right: 2px;
}
.act-badge {
    position: absolute;
    right: 7px;
    bottom: 5px;
    width: 16px;
    height: 16px;
    border-radius: 50%;
    background-color: #0078d4;
    color: #fff;
    font-size: 10px;
    font-weight: 600;
    line-height: 16px;
    text-align: center;
}

/* sidebar */
.sidebar {
    flex: none;
    width: 200px;
    border-right: 1px solid #2b2b2b;
}
.side-head {
    height: 34px;
    display: flex;
    align-items: center;
    gap: 8px;
    padding: 0 14px 0 20px;
}
.side-title {
    flex: 1;
    font-size: 11px;
}
.workspace-row {
    display: flex;
    align-items: center;
    gap: 12px;
    margin-top: 9px;
    padding-left: 4px;
}
.workspace-select {
    width: 155px;
    height: 33px;
    display: flex;
    align-items: center;
    justify-content: space-between;
    border: 1px solid #4a4a4a;
    border-radius: 4px;
    padding: 0 5px 0 9px;
}
.new-request {
    height: 32px;
    display: flex;
    align-items: center;
    margin: 9px 4px 0;
    background-color: #0078d4;
    border-radius: 3px;
    color: #fff;
    font-weight: 600;
}
.new-label {
    width: 157px;
    padding-top: 1px;
    border-right: 1px solid #4c9be0;
    line-height: 20px;
    text-align: center;
}
.new-chev {
    flex: 1;
    display: flex;
    justify-content: center;
}
.side-seg {
    height: 32px;
    display: flex;
    margin: 8px 8px 0;
    background-color: #2f2f2f;
    border-radius: 4px;
}
.seg-item {
    flex: 1;
    display: flex;
    align-items: center;
    justify-content: center;
}
.seg-on {
    background-color: #1f1f1f;
    border: 1px solid #4a4a4a;
    border-radius: 4px;
}
.filter-row {
    display: flex;
    align-items: center;
    gap: 10px;
    margin-top: 8px;
    padding-left: 10px;
    color: #8a8a8a;
}
.filter-box {
    width: 155px;
    height: 32px;
    display: flex;
    align-items: center;
    gap: 8px;
    border: 1px solid #4a4a4a;
    border-radius: 4px;
    padding: 0 12px;
    color: #777;
}
.tree-row {
    display: flex;
    align-items: center;
    gap: 13px;
    margin-top: 14px;
    padding-left: 9px;
    letter-spacing: -0.4px;
}
.tree-row svg {
    color: #777;
}

/* editor tabs */
.main {
    flex: 1;
    min-width: 0;
    display: flex;
    flex-direction: column;
}
.tabs {
    flex: none;
    height: 34px;
    display: flex;
    border-bottom: 1px solid #2b2b2b;
    background-color: #181818;
    font-size: 13px;
    letter-spacing: -0.4px;
}
.tab {
    flex: none;
    display: flex;
    align-items: center;
    gap: 5px;
    padding-top: 1px;
    padding-left: 8px;
    border-right: 1px solid #2b2b2b;
    color: #9d9d9d;
}
.tab-active {
    background-color: #1f1f1f;
    border-top: 1px solid #0078d4;
    height: 34px;
    color: #fff;
}
.tab-w1 { width: 164px; gap: 7px; }
.tab-w2 { width: 127px; padding-left: 12px; }
.tab-w3 { width: 159px; padding-left: 18px; gap: 3px; }
.tab-w4 { width: 148px; padding-left: 12px; }
.tab-w5 { width: 125px; padding-left: 18px; gap: 1px; }
.tab-w6 { width: 132px; padding-left: 18px; gap: 3px; }
.tab-w7 { width: 130px; padding-left: 14px; }
.tab-w8 { width: 132px; padding-left: 13px; }
.tab-w9 { width: 84px; padding-left: 15px; border-right: 0; }
.tab-name {
    white-space: nowrap;
}
.ital {
    font-style: italic;
}
.http-ic {
    color: #4caf7a;
}
.bang {
    width: 12px;
    color: #a563d8;
    font-size: 16px;
    font-weight: 700;
    font-style: italic;
}
.dot {
    width: 8px;
    height: 8px;
    margin-left: 6px;
    border-radius: 50%;
    background-color: #9d9d9d;
}
.dot-white {
    margin-left: 0;
    background-color: #fff;
}
.tab-close {
    stroke-width: 1.5;
    margin-left: 2px;
}
.html-ic {
    color: #e8622c;
    font-size: 11px;
    font-weight: 700;
    letter-spacing: 0;
}
.tab-actions {
    display: flex;
    align-items: center;
    gap: 10px;
    padding-left: 3px;
}

/* postman request */
.postman-view {
    flex: 1;
    min-height: 0;
    background-color: #1f1f1f;
}
.req-head {
    height: 48px;
    display: flex;
    align-items: center;
    padding: 3px 8px 0;
    border-bottom: 1px solid #3a3a3a;
}
.http-box {
    width: 24px;
    height: 24px;
    display: flex;
    align-items: center;
    justify-content: center;
    background-color: #2a2f2c;
    border: 1px solid #3f3f3f;
    border-radius: 3px;
    color: #4caf7a;
}
.req-name {
    flex: 1;
    margin-left: 12px;
    color: #e6e6e6;
    font-weight: 600;
}
.req-save {
    display: flex;
    align-items: center;
    gap: 6px;
    margin-right: 17px;
    color: #9d9d9d;
    font-size: 11.5px;
}
.req-save .vsep {
    margin-left: 2px;
    margin-right: 4px;
}
.env-btn {
    width: 162px;
    height: 32px;
    display: flex;
    align-items: center;
    background-color: #3a3a3a;
    border-radius: 3px;
    padding-left: 12px;
    color: #e6e6e6;
}
.env-btn span {
    width: 109px;
}
.env-btn svg {
    margin-left: 12px;
}
.url-bar {
    display: flex;
    gap: 8px;
    height: 40px;
    margin: 9px 8px 0;
}
.url-input {
    flex: 1;
    display: flex;
    align-items: center;
    border: 1px solid #4a4a4a;
    border-radius: 4px;
    padding-left: 15px;
}
.method {
    width: 78px;
    color: #f87261;
    font-weight: 600;
}
.vsep.tall {
    height: 20px;
    margin: 0 8px 0 7px;
}
.send-btn {
    width: 100px;
    display: flex;
    align-items: center;
    background-color: #0078d4;
    border-radius: 3px;
    color: #fff;
    font-size: 14px;
    font-weight: 600;
}
.send-label {
    width: 66px;
    border-right: 1px solid #4c9be0;
    line-height: 20px;
    text-align: center;
}
.send-chev {
    flex: 1;
    display: flex;
    justify-content: center;
}
.req-tabs,
.res-tabs {
    display: flex;
    gap: 23.500px;
    padding: 0 8px;
}
.req-tabs {
    height: 40px;
    padding-top: 16px;
    letter-spacing: -0.36px;
}
.rtab {
    height: 24px;
    border-bottom: 2px solid transparent;
    line-height: 17px;
}
.rtab-wide {
    margin-right: 4px;
}
.rtab-on {
    border-bottom-color: #0078d4;
    color: #d8d8d8;
}
.rtab em {
    color: #49c46f;
    font-style: normal;
}
.req-links {
    display: flex;
    gap: 8px;
    margin-left: auto;
    padding-right: 8px;
    line-height: 17px;
    color: #4a8cf0;
}
.params-title {
    margin: 12px 8px 0;
    color: #cccccc;
    font-size: 12px;
    font-weight: 600;
    line-height: 18px;
}
.params-table {
    display: grid;
    grid-template-columns: 45px 599px 600px;
    grid-auto-rows: 33px;
    margin: 6px 8px 0;
    border: 1px solid #444;
    border-bottom: 0;
}
.pcell {
    padding-left: 8px;
    border-right: 1px solid #444;
    border-bottom: 1px solid #444;
    line-height: 34px;
}
.phead {
    font-weight: 600;
    color: #d8d8d8;
}
.pph {
    color: #666;
}
.plast {
    border-right: 0;
}
.res-tabs {
    height: 41px;
    margin-top: 106px;
    border-top: 1px solid #3a3a3a;
    padding-top: 8px;
    padding-right: 0;
    letter-spacing: -0.2px;
}
.res-meta {
    display: flex;
    align-items: flex-start;
    gap: 8px;
    margin-left: auto;
    padding-right: 8px;
    line-height: 17px;
    font-size: 11.700px;
    letter-spacing: -0.3px;
}
.res-meta b {
    color: #49c46f;
    font-weight: 400;
}
.res-dots {
    color: #777;
    margin-left: 3px;
}
.res-split {
    color: #777;
    margin-left: 5px;
}
.res-chev {
    color: #777;
    margin-left: 11px;
}
.view-seg {
    width: 168px;
    height: 32px;
    display: flex;
    align-items: center;
    margin: 0 8px;
    background-color: #2f2f2f;
    border-radius: 4px;
}
.vs-item {
    padding: 0 11px;
    line-height: 30px;
}
.vs-on {
    margin-left: auto;
    background-color: #1f1f1f;
    border: 1px solid #555;
    border-radius: 3px;
}

/* preview page */
.preview {
    height: 384px;
    margin: 16px 8px 0;
    border: 8px solid #fff;
    background-color: #212529;
}
.app {
    height: 368px;
    display: flex;
    overflow: hidden;
    color: #dee2e6;
    font-size: 15px;
}
.app-page {
    flex: 1;
    min-width: 0;
    padding-left: 60px;
}
.app-title {
    height: 48px;
    display: flex;
    justify-content: center;
    gap: 24px;
    margin-top: -39px;
    padding-right: 70px;
    color: #ffc107;
}
.app-title h1 {
    margin: 0;
    font-size: 44px;
    font-weight: 300;
    line-height: 48px;
    letter-spacing: 0;
}
.app-mark {
    width: 25px;
    height: 36px;
    margin-top: 12px;
    stroke: none;
}
.app-cols {
    display: flex;
    gap: 16px;
    margin-top: 28px;
}
.app-card {
    height: 314px;
    border: 1px solid #495057;
    border-radius: 8px;
    padding: 8px;
}
.form-card {
    width: 358px;
    padding-top: 16px;
}
.field {
    height: 58px;
    margin-bottom: 16px;
    border: 1px solid #495057;
    border-radius: 6px;
    padding: 8px 12px;
    line-height: 24px;
}
.form-btns {
    display: flex;
    justify-content: center;
    gap: 20px;
    margin-top: 15px;
}
.btn {
    height: 32px;
    padding: 0 9px;
    border-radius: 4px;
    font-size: 13.500px;
    line-height: 32px;
}
.btn-warn {
    background-color: #ffc107;
    color: #000;
}
.btn-danger {
    background-color: #dc3545;
    color: #fff;
}
.table-card {
    width: 718px;
}
.members {
    width: 100%;
    table-layout: fixed;
    border-collapse: collapse;
}
.c-id { width: 58px; }
.c-nom { width: 139px; }
.c-ape { width: 146px; }
.c-mem { width: 216px; }
.members th {
    height: 40px;
    padding: 0 9px;
    background-color: #fff3cd;
    border-bottom: 1px solid #c9bd96;
    color: #000;
    font-weight: 700;
    text-align: left;
}
.members td {
    height: 48px;
    padding: 8px 9px 6px;
    border-bottom: 1px solid #495057;
    vertical-align: top;
    line-height: 24px;
}
.members tbody tr:nth-child(odd) {
    background-color: #2c3034;
}
.acts {
    display: flex;
    gap: 20px;
}
.act {
    width: 32px;
    height: 31px;
    display: flex;
    align-items: center;
    justify-content: center;
    border-radius: 4px;
}
.act svg {
    width: 16px;
    height: 16px;
}
.act-edit {
    background-color: #ffc107;
    color: #000;
}
.act-del {
    background-color: #dc3545;
    color: #fff;
}
.app-scroll {
    flex: none;
    width: 17px;
    display: flex;
    flex-direction: column;
    background-color: #3a3d40;
}
.arrow-up,
.arrow-down {
    flex: none;
    height: 16px;
    position: relative;
}
.arrow-up::after,
.arrow-down::after {
    content: "";
    position: absolute;
    left: 5px;
    top: 6px;
    border: 4px solid transparent;
    border-top: 0;
    border-bottom: 4px solid #e0e0e0;
}
.arrow-down::after {
    border-bottom: 0;
    border-top: 4px solid #888;
}
.scroll-thumb {
    width: 13px;
    height: 288px;
    margin: 48px 2px 0;
    background-color: #686868;
}
.arrow-down {
    margin-top: auto;
}

/* terminal panel */
.panel {
    flex: none;
    height: 113px;
    background-color: #181818;
    border-top: 1px solid #2b2b2b;
}
.panel-tabs {
    height: 35px;
    display: flex;
    gap: 24px;
    align-items: flex-start;
    padding: 8px 0 0 20px;
    color: #9d9d9d;
    font-size: 11px;
    line-height: 17px;
}
.ptab-on {
    height: 20px;
    border-bottom: 1px solid #0078d4;
    color: #e0e0e0;
}
.panel-actions {
    display: flex;
    align-items: center;
    gap: 9px;
    margin-left: auto;
    padding-right: 15px;
    color: #ccc;
}
.plus-big {
    margin-right: -7px;
}
.panel-body {
    display: flex;
    height: 77px;
    overflow: hidden;
}
.term {
    flex: 1;
    margin: 0;
    padding: 9px 0 0 20px;
    font-family: "DejaVu Sans Mono", monospace;
    font-size: 11.600px;
    letter-spacing: 0;
    line-height: 17.500px;
    color: #d4d4d4;
}
.term .g {
    color: #0dbc79;
}
.cursor {
    display: inline-block;
    width: 7px;
    height: 17px;
    border: 1px solid #ccc;
    vertical-align: top;
}
.term-rule {
    position: relative;
    width: 14px;
    margin-top: 9px;
    border-left: 1px solid #000;
    border-top: 1px solid #000;
}
.term-rule::before {
    content: "";
    position: absolute;
    left: 0;
    top: 0;
    width: 3px;
    height: 3px;
    background-color: #555;
}
.term-list {
    width: 119px;
    padding: 0 0 0 9px;
    border-left: 1px solid #2b2b2b;
}
.term-row {
    height: 22px;
    display: flex;
    align-items: center;
    gap: 4px;
    position: relative;
    top: -2px;
    color: #bf9b05;
    font-size: 13px;
}
.term-row span {
    width: 60px;
}
.term-ic {
    color: #ccc;
}
.warn-ic {
    color: #7d6708;
}

/* chat */
.chat {
    flex: none;
    width: 412px;
    display: flex;
    flex-direction: column;
    border-left: 1px solid #2b2b2b;
    overflow: hidden;
}
.chat-head {
    flex: none;
    height: 34px;
    display: flex;
    align-items: flex-start;
    padding: 0 15px 0 19px;
    background-color: #181818;
    box-shadow: 0 2px 3px #0e0e0e;
    z-index: 1;
}
.chat-title {
    padding: 9px 2px 0;
    height: 29px;
    border-bottom: 1px solid #0078d4;
    font-size: 11.500px;
}
.chat-actions {
    display: flex;
    align-items: center;
    gap: 8px;
    margin-left: auto;
    height: 34px;
}
.chat-body {
    flex: 1;
    min-height: 0;
    padding: 0 15px;
    font-size: 13px;
    letter-spacing: -0.37px;
    line-height: 19.500px;
    overflow: hidden;
}
.chat-body p {
    margin: 0;
}
.chat-body .first {
    margin-top: -3px;
}
.chat-body ol {
    margin: 13px 0 0;
    padding: 0 0 0 29px;
}
.chat-body ul {
    margin: 0;
    padding: 0 0 0 24px;
    list-style-type: circle;
}
.chat-body ul li::marker {
    color: #9d9d9d;
}
.chat-body b {
    color: #e6e6e6;
    font-weight: 700;
}
.nonum {
    list-style: none;
}
.chat-body .after-code {
    margin-top: 17px;
}
.chat-body .after-code2 {
    margin-top: 16px;
}
.chat-body hr {
    height: 1px;
    margin: 15px 0 6px;
    border: 0;
    background-color: #3c3c3c;
}
.code {
    height: 121px;
    margin: 0;
    padding: 9px 9px;
    background-color: #1e1e1e;
    border: 1px solid #3c3c3c;
    border-radius: 4px;
    font-family: "DejaVu Sans Mono", monospace;
    font-size: 12.800px;
    letter-spacing: 0;
    line-height: 20px;
    color: #d4d4d4;
}
.code.short {
    height: 62px;
}
.code i {
    color: #9d9d9d;
    font-style: normal;
}
.chat-body code {
    display: inline-block;
    margin-bottom: 2px;
    padding: 0 4px;
    background-color: #333333;
    border-radius: 4px;
    font-family: "DejaVu Sans Mono", monospace;
    font-size: 10.800px;
    letter-spacing: 0;
    line-height: 16px;
    color: #d4d4d4;
}
.feedback {
    display: flex;
    gap: 11px;
    margin-top: 8px;
    padding-left: 4px;
}
.chat-input {
    flex: none;
    height: 92px;
    margin: 0 15px 14px;
    padding: 7px;
    background-color: #313131;
    border: 1px solid #3c3c3c;
    border-radius: 4px;
}
.ctx-chip {
    width: 120px;
    height: 20px;
    display: flex;
    align-items: center;
    gap: 2px;
    border: 1px solid #4a4a4a;
    border-radius: 4px;
    padding-left: 4px;
    font-size: 11px;
}
.chat-ph {
    margin-top: 9px;
    color: #8a8a8a;
    font-size: 12.500px;
    line-height: 18px;
}
.chat-tools {
    display: flex;
    align-items: center;
    gap: 1px;
    margin-top: 10px;
    padding-left: 5px;
    font-size: 11.500px;
}
.model {
    margin-left: 12px;
}
.at {
    margin-left: auto;
    margin-right: 6px;
    font-size: 14px;
}
.mic {
    margin-right: 12px;
}

/* status bar */
.statusbar {
    flex: none;
    height: 22px;
    display: flex;
    align-items: center;
    border-top: 1px solid #2b2b2b;
    font-size: 11.800px;
}
.statusbar .ic-sm {
    margin-right: 2px;
}
.remote {
    width: 34px;
    height: 22px;
    display: flex;
    align-items: center;
    justify-content: center;
    background-color: #0078d4;
    color: #fff;
}
.remote .ic-sm {
    margin: 0;
}
.launch {
    display: flex;
    align-items: center;
    margin-left: 7px;
}
.errs {
    display: flex;
    align-items: center;
    gap: 1px;
    margin-left: 16px;
}
.ovr {
    width: 43px;
    height: 22px;
    margin-left: auto;
    background-color: #3a3d41;
    line-height: 22px;
    text-align: center;
}
.sb-ic {
    width: 30px;
    display: flex;
    justify-content: center;
}
.sb-ic + .sb-ic {
    margin-right: 7px;
}

/* windows taskbar */
.taskbar {
    flex: none;
    height: 48px;
    display: flex;
    align-items: center;
    background-color: #eeeeee;
    color: #1a1a1a;
    font-size: 12px;
    letter-spacing: 0;
}
.weather {
    display: flex;
    align-items: center;
    gap: 7px;
    width: 749px;
    padding-left: 18px;
}
.cloud {
    width: 25px;
    height: 20px;
    stroke: none;
}
.weather-text {
    display: flex;
    flex-direction: column;
    line-height: 16px;
    font-size: 11.500px;
}
.w-sub {
    color: #555;
}
.task-center {
    display: flex;
    align-items: center;
    height: 48px;
}
.win-logo {
    width: 23px;
    height: 23px;
    stroke: none;
}
.task-search {
    width: 218px;
    height: 31px;
    display: flex;
    align-items: center;
    gap: 8px;
    margin-left: 14px;
    padding-left: 12px;
    background-color: #fbfbfb;
    border: 1px solid #d8d8d8;
    border-radius: 16px;
    color: #555;
    font-size: 12.500px;
}
.task-search svg {
    width: 16px;
    height: 16px;
    stroke: #1a1a1a;
    stroke-width: 1.5;
}
.task-ic {
    width: 25px;
    height: 25px;
    stroke: none;
}
.task-search + .task-ic {
    margin-left: 12px;
}
.task-app {
    position: relative;
    width: 38px;
    height: 38px;
    display: flex;
    align-items: center;
    justify-content: center;
}
.task-folder {
    margin-left: 13px;
}
.task-chrome {
    margin-left: 7px;
}
.task-dot {
    position: absolute;
    left: 17px;
    bottom: -3px;
    width: 5px;
    height: 4px;
    border-radius: 2px;
    background-color: #8a8a8a;
}
.task-on {
    margin-left: 5px;
    background-color: #fafafa;
    border-radius: 4px;
}
.task-bar {
    position: absolute;
    left: 11px;
    bottom: 0;
    width: 16px;
    height: 3px;
    border-radius: 2px;
    background-color: #0078d4;
}
.chrome-badge {
    position: absolute;
    right: 1px;
    top: 2px;
    width: 15px;
    height: 15px;
    border-radius: 50%;
    background-color: #0b8a74;
    color: #fff;
    font-size: 8px;
    line-height: 15px;
    text-align: center;
}
.tray {
    display: flex;
    align-items: center;
    margin-left: auto;
    padding-right: 20px;
}
.tray-up {
    stroke-width: 1.5;
    margin-right: 20px;
}
.lang {
    display: flex;
    flex-direction: column;
    align-items: center;
    margin-right: 20px;
    line-height: 16px;
    font-size: 11.500px;
}
.tray-ic {
    width: 18px;
    height: 16px;
    margin-right: 8px;
    stroke: #1a1a1a;
}
.tray-net {
    margin-right: 4px;
}
.clock {
    display: flex;
    flex-direction: column;
    align-items: flex-end;
    margin-left: 6px;
    line-height: 16px;
    font-size: 12px;
}
```
